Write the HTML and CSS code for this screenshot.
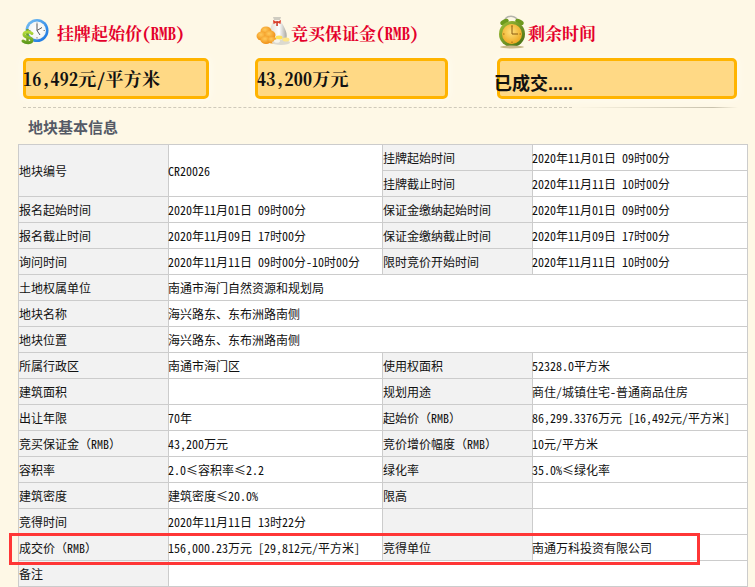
FILE: index.html
```html
<!DOCTYPE html>
<html lang="zh-CN">
<head>
<meta charset="utf-8">
<title>地块基本信息</title>
<link rel="stylesheet" href="styles.css">
</head>
<body>
<main class="page">
  <section class="summary">
    <div class="stat">
      <h2 class="stat-title">
        <svg class="icon icon-clock" viewBox="0 0 34 36" aria-hidden="true">
          <defs>
            <radialGradient id="face" cx="50%" cy="45%" r="60%"><stop offset="0" stop-color="#ffffff"/><stop offset="0.8" stop-color="#f4f6f4"/><stop offset="1" stop-color="#b9c9d6"/></radialGradient>
            <linearGradient id="ring" x1="0" y1="0" x2="1" y2="1"><stop offset="0" stop-color="#7cc4f4"/><stop offset="1" stop-color="#0f6fe0"/></linearGradient>
            <linearGradient id="dollar" x1="0" y1="0" x2="0" y2="1"><stop offset="0" stop-color="#b4dc3c"/><stop offset="1" stop-color="#5f9a1c"/></linearGradient>
          </defs>
          <circle cx="14" cy="16.5" r="11.5" fill="url(#ring)"/>
          <circle cx="14" cy="16.5" r="9" fill="url(#face)"/>
          <path d="M14 16.5 L14 10 M14 16.5 L19 13.5 M14 16.5 L17 21" stroke="#555" stroke-width="1" fill="none"/>
          <path d="M14 8.5v1.5M22 16.5h-1.500M14 24.500v-1.500M6 16.500h1.500" stroke="#888" stroke-width="1"/>
          <path d="M4.500 15v15" stroke="#6f9f22" stroke-width="2.500"/>
          <path d="M9 19.500 C6.500 17 1 17.500 1 20.500 C1 24.500 9 22.500 9 26 C9 29.500 3 29.500 0 27" fill="none" stroke="url(#dollar)" stroke-width="3" stroke-linecap="round"/>
        </svg>
        <span class="stat-label">挂牌起始价(RMB)</span>
      </h2>
      <div class="stat-box box-first"><span class="stat-value">16,492元/平方米</span></div>
    </div>
    <div class="stat">
      <h2 class="stat-title">
        <svg class="icon icon-money" viewBox="0 0 36 36" aria-hidden="true">
          <defs>
            <linearGradient id="bag" x1="0" y1="0" x2="1" y2="0"><stop offset="0" stop-color="#dedbd0"/><stop offset="0.55" stop-color="#ffffff"/><stop offset="1" stop-color="#a9a79e"/></linearGradient>
            <radialGradient id="coin" cx="40%" cy="35%" r="70%"><stop offset="0" stop-color="#ffc95a"/><stop offset="1" stop-color="#ee8a10"/></radialGradient>
          </defs>
          <path d="M19 6 C16 11 14 17 15 23 C16 29 29 30 31.500 24 C33 18 28 11 25 6 Z" fill="url(#bag)"/>
          <path d="M18 3 h8 l-1 3 h-6 z" fill="#cfccc1"/>
          <path d="M18 6 L22 8 L26 6 L25.500 10 L22 8.500 L18.500 10 Z" fill="#e0402a"/>
          <rect x="21.300" y="7" width="1.500" height="5" fill="#c9301e"/>
          <ellipse cx="11" cy="17" rx="5.500" ry="4.500" fill="url(#coin)"/>
          <ellipse cx="7" cy="22" rx="5.500" ry="4.500" fill="url(#coin)"/>
          <ellipse cx="15" cy="21" rx="5.500" ry="4.500" fill="url(#coin)"/>
          <ellipse cx="11" cy="26" rx="5.500" ry="4" fill="url(#coin)"/>
          <ellipse cx="17" cy="26" rx="4.500" ry="3.500" fill="url(#coin)"/>
          <ellipse cx="26" cy="28.500" rx="9" ry="2.500" fill="#dcdad0"/>
          <ellipse cx="24" cy="23.500" rx="3.500" ry="2" fill="#ffe25a"/>
          <ellipse cx="31" cy="25.500" rx="3.500" ry="2" fill="#ffe788"/>
          <ellipse cx="22" cy="27" rx="3" ry="1.800" fill="#f6f4ec"/>
        </svg>
        <span class="stat-label">竞买保证金(RMB)</span>
      </h2>
      <div class="stat-box box-second"><span class="stat-value">43,200万元</span></div>
    </div>
    <div class="stat">
      <h2 class="stat-title">
        <svg class="icon icon-alarm" viewBox="0 0 31 36" aria-hidden="true">
          <defs>
            <radialGradient id="dial" cx="45%" cy="40%" r="60%"><stop offset="0" stop-color="#ffe07a"/><stop offset="1" stop-color="#eda920"/></radialGradient>
            <linearGradient id="case" x1="0" y1="0" x2="1" y2="1"><stop offset="0" stop-color="#a6c43a"/><stop offset="1" stop-color="#3f6a12"/></linearGradient>
          </defs>
          <path d="M7 9 C7 0 21 0 21 9" fill="none" stroke="#b4b4ac" stroke-width="1.500"/>
          <ellipse cx="7.500" cy="8" rx="4.500" ry="2.500" transform="rotate(-25 7.500 8)" fill="#6d9a1e"/>
          <ellipse cx="22.500" cy="8" rx="4.500" ry="2.500" transform="rotate(25 22.500 8)" fill="#6d9a1e"/>
          <circle cx="15" cy="20" r="13" fill="url(#case)"/>
          <circle cx="15" cy="20" r="10" fill="url(#dial)"/>
          <path d="M15 20 V12 M15 20 H21" stroke="#8a5a10" stroke-width="1" fill="none"/>
          <path d="M15 11v1.500M24 20h-1.500M15 29v-1.500M6 20h1.500" stroke="#a06a10" stroke-width="1"/>
          <ellipse cx="15" cy="33" rx="12" ry="1.500" fill="#c9b98a"/>
        </svg>
        <span class="stat-label">剩余时间</span>
      </h2>
      <div class="stat-box box-third"><span class="stat-status">已成交.....</span></div>
    </div>
  </section>

  <div class="divider"><span class="divider-dash"></span><span class="divider-fade"></span></div>

  <h3 class="section-title">地块基本信息</h3>

  <table class="info">
    <colgroup><col class="c-label"><col class="c-value"><col class="c-label"><col class="c-value-r"></colgroup>
    <tbody>
      <tr><th rowspan="2">地块编号</th><td rowspan="2">CR20026</td><th>挂牌起始时间</th><td>2020年11月01日 09时00分</td></tr>
      <tr><th>挂牌截止时间</th><td>2020年11月11日 10时00分</td></tr>
      <tr><th>报名起始时间</th><td>2020年11月01日 09时00分</td><th>保证金缴纳起始时间</th><td>2020年11月01日 09时00分</td></tr>
      <tr><th>报名截止时间</th><td>2020年11月09日 17时00分</td><th>保证金缴纳截止时间</th><td>2020年11月09日 17时00分</td></tr>
      <tr><th>询问时间</th><td>2020年11月11日 09时00分-10时00分</td><th>限时竞价开始时间</th><td>2020年11月11日 10时00分</td></tr>
      <tr><th>土地权属单位</th><td colspan="3">南通市海门自然资源和规划局</td></tr>
      <tr><th>地块名称</th><td colspan="3">海兴路东、东布洲路南侧</td></tr>
      <tr><th>地块位置</th><td colspan="3">海兴路东、东布洲路南侧</td></tr>
      <tr><th>所属行政区</th><td>南通市海门区</td><th>使用权面积</th><td>52328.0平方米</td></tr>
      <tr><th>建筑面积</th><td></td><th>规划用途</th><td>商住/城镇住宅-普通商品住房</td></tr>
      <tr><th>出让年限</th><td>70年</td><th>起始价<span class="wide">（</span>RMB<span class="wide">）</span></th><td>86,299.3376万元 [16,492元/平方米]</td></tr>
      <tr><th>竞买保证金<span class="wide">（</span>RMB<span class="wide">）</span></th><td>43,200万元</td><th>竞价增价幅度<span class="wide">（</span>RMB<span class="wide">）</span></th><td>10元/平方米</td></tr>
      <tr><th>容积率</th><td>2.0<span class="sign">≤</span>容积率<span class="sign">≤</span>2.2</td><th>绿化率</th><td>35.0%<span class="sign">≤</span>绿化率</td></tr>
      <tr><th>建筑密度</th><td>建筑密度<span class="sign">≤</span>20.0%</td><th>限高</th><td></td></tr>
      <tr><th>竞得时间</th><td>2020年11月11日 13时22分</td><th></th><td></td></tr>
      <tr><th>成交价<span class="wide">（</span>RMB<span class="wide">）</span></th><td>156,000.23万元 [29,812元/平方米]</td><th>竞得单位</th><td>南通万科投资有限公司</td></tr>
      <tr><th>备注</th><td colspan="3"></td></tr>
    </tbody>
  </table>

  <div class="highlight"></div>
</main>
</body>
</html>
```
FILE: styles.css
```css
html, body {
  margin: 0;
  padding: 0;
  height: 587px;
  overflow: hidden;
  background: #fef8e6;
}

.page {
  position: relative;
  padding: 14px 8px 0 18px;
  font-family: "Noto Sans CJK SC", "Liberation Sans", sans-serif;
  font-feature-settings: "hwid";
}

.summary {
  display: grid;
  grid-template-columns: 232px 242px 240px;
  padding-left: 5px;
}

.stat-title {
  display: flex;
  align-items: center;
  height: 36px;
  margin: 0 0 8px;
  font-size: 17px;
  font-weight: 700;
  line-height: 36px;
  color: #e4002b;
  font-family: "Noto Serif CJK SC", "Noto Sans CJK SC", serif;
}

.stat-label {
  padding-top: 2px;
}

.icon {
  flex: none;
  height: 36px;
  overflow: visible;
}

.icon-clock { width: 34px; }
.icon-money { width: 36px; }
.icon-alarm { width: 31px; }

.stat-box {
  box-sizing: border-box;
  height: 41px;
  border: 3px solid #ffb400;
  border-radius: 5px;
  background: #ffd985;
  box-shadow: 0 0 8px #fffdf4;
  display: flex;
  align-items: center;
  color: #111;
}

.box-first { width: 186px; }
.box-second { width: 193px; }
.box-third { width: 240px; }

.stat-value {
  margin-left: -3px;
  padding-bottom: 2px;
  font-size: 18px;
  font-weight: 700;
  letter-spacing: 0.2px;
  font-family: "Noto Serif CJK SC", "Noto Sans CJK SC", serif;
}

.box-second .stat-value { margin-left: -1px; }

.stat-status {
  margin: 6px 0 0 -6px;
  font-size: 18px;
  font-weight: 700;
  font-feature-settings: normal;
  font-family: "Liberation Sans", "Noto Sans CJK SC", sans-serif;
}

.divider {
  display: flex;
  margin: 8px 0 0 5px;
  width: 715px;
  height: 1px;
}

.divider-dash {
  flex: 549px 0 0;
  border-top: 1px dashed #cfcabb;
}

.divider-fade {
  flex: 1;
  background: linear-gradient(to right, #fef8e6, #c8c2ae 85%, #fef8e6);
}

.section-title {
  margin: 10px 0 9px 10px;
  height: 17px;
  font-size: 15px;
  line-height: 17px;
  font-weight: 700;
  color: #555a66;
}

.info {
  border-collapse: collapse;
  table-layout: fixed;
  width: 729px;
  background: #fff;
  font-size: 12px;
  color: #111;
}

.c-label { width: 150px; }
.c-value { width: 214px; }
.c-value-r { width: 215px; }

.info th,
.info td {
  height: 25px;
  padding: 0;
  border: 1px solid #ccc;
  text-align: left;
  font-weight: 400;
  line-height: 14px;
  vertical-align: middle;
  white-space: nowrap;
  box-sizing: content-box;
}

.info td {
  text-indent: -1px;
}

.info th {
  background: #f2f2f2;
}

.wide {
  font-feature-settings: normal;
}

.sign {
  display: inline-block;
  width: 12px;
  text-indent: 0;
  text-align: center;
  font-feature-settings: normal;
}

.highlight {
  position: absolute;
  left: 9px;
  top: 533px;
  width: 691px;
  height: 32px;
  box-sizing: border-box;
  border: 3px solid #ff3636;
  pointer-events: none;
}
```
